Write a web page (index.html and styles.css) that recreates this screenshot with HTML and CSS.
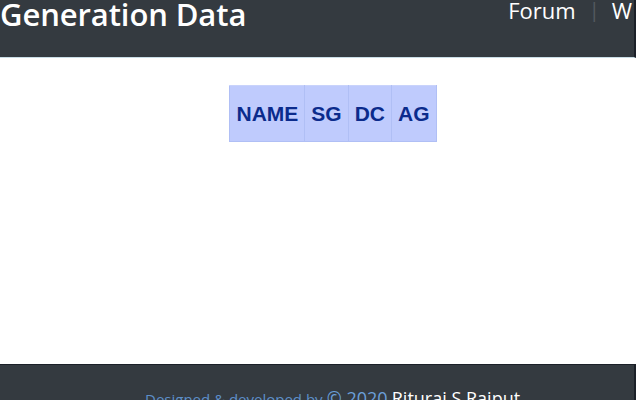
FILE: index.html
```html
<!DOCTYPE html>
<html lang="en">
<head>
  <meta charset="UTF-8" />
  <meta name="viewport" content="width=device-width, initial-scale=1.0"/>
  <title>Generation Data</title>
  <link rel="stylesheet" href="styles.css">
</head>
<body>
  <div class="page">
    <div class="topbar">
      <h1>Generation Data</h1>
      <nav class="links">
        <a href="#">Forum</a>
        <span class="sep">|</span>
        <a href="#">W</a>
      </nav>
    </div>

    <div class="content">
      <table class="gen-table">
        <tr>
          <th>NAME</th>
          <th>SG</th>
          <th>DC</th>
          <th>AG</th>
        </tr>
      </table>
    </div>

    <div class="footer">
      <span class="muted">Designed &amp; developed by</span>
      <span class="year">&copy; 2020</span>
      <span class="author">Rituraj S Rajput</span>
    </div>
  </div>
</body>
</html>
```

FILE: styles.css
```css
* {
  margin: 0;
  padding: 0;
  box-sizing: border-box;
}
body {
  background: #fff;
  font-family: 'Open Sans', sans-serif;
  overflow: hidden;
}
.page {
  width: 636px;
  height: 400px;
  display: flex;
  flex-direction: column;
}
.topbar {
  background: #343a40;
  height: 58px;
  display: flex;
  justify-content: space-between;
  align-items: flex-start;
  border-right: 2px solid #1b2028;
  border-bottom: 1px solid #c9dde6;
  overflow: hidden;
}
.topbar h1 {
  color: #fff;
  font-size: 31px;
  font-weight: 600;
  line-height: 28px;
  letter-spacing: -0.1px;
}
.links {
  display: flex;
  align-items: flex-start;
  line-height: 20px;
  margin-right: 2px;
}
.links a {
  color: #fff;
  text-decoration: none;
  font-size: 22px;
  font-weight: 400;
}
.sep {
  color: #555b61;
  font-size: 20px;
  margin: 0 12px 0 13px;
}
.content {
  flex: 1;
  display: flex;
  justify-content: center;
  padding-top: 27px;
  padding-left: 30px;
}
.gen-table {
  border-collapse: collapse;
  height: 57px;
  align-self: flex-start;
}
.gen-table th {
  background: #bfcbfd;
  color: #0b2b8c;
  font-family: 'Liberation Sans', Arial, sans-serif;
  font-size: 21px;
  font-weight: 700;
  padding: 0 6px;
  border: 1px solid #b0bff5;
  border-top-color: #c9d3fb;
}
.footer {
  background: #343a40;
  height: 36px;
  border-top: 1px solid #1b2028;
  border-right: 2px solid #1b2028;
  padding: 22px 0 0 145px;
  white-space: nowrap;
  overflow: hidden;
  line-height: 22px;
}
.muted {
  color: #5d8fc9;
  font-size: 15px;
}
.year {
  color: #6b9fd8;
  font-size: 18px;
}
.author {
  color: #fff;
  font-size: 18px;
}
```
